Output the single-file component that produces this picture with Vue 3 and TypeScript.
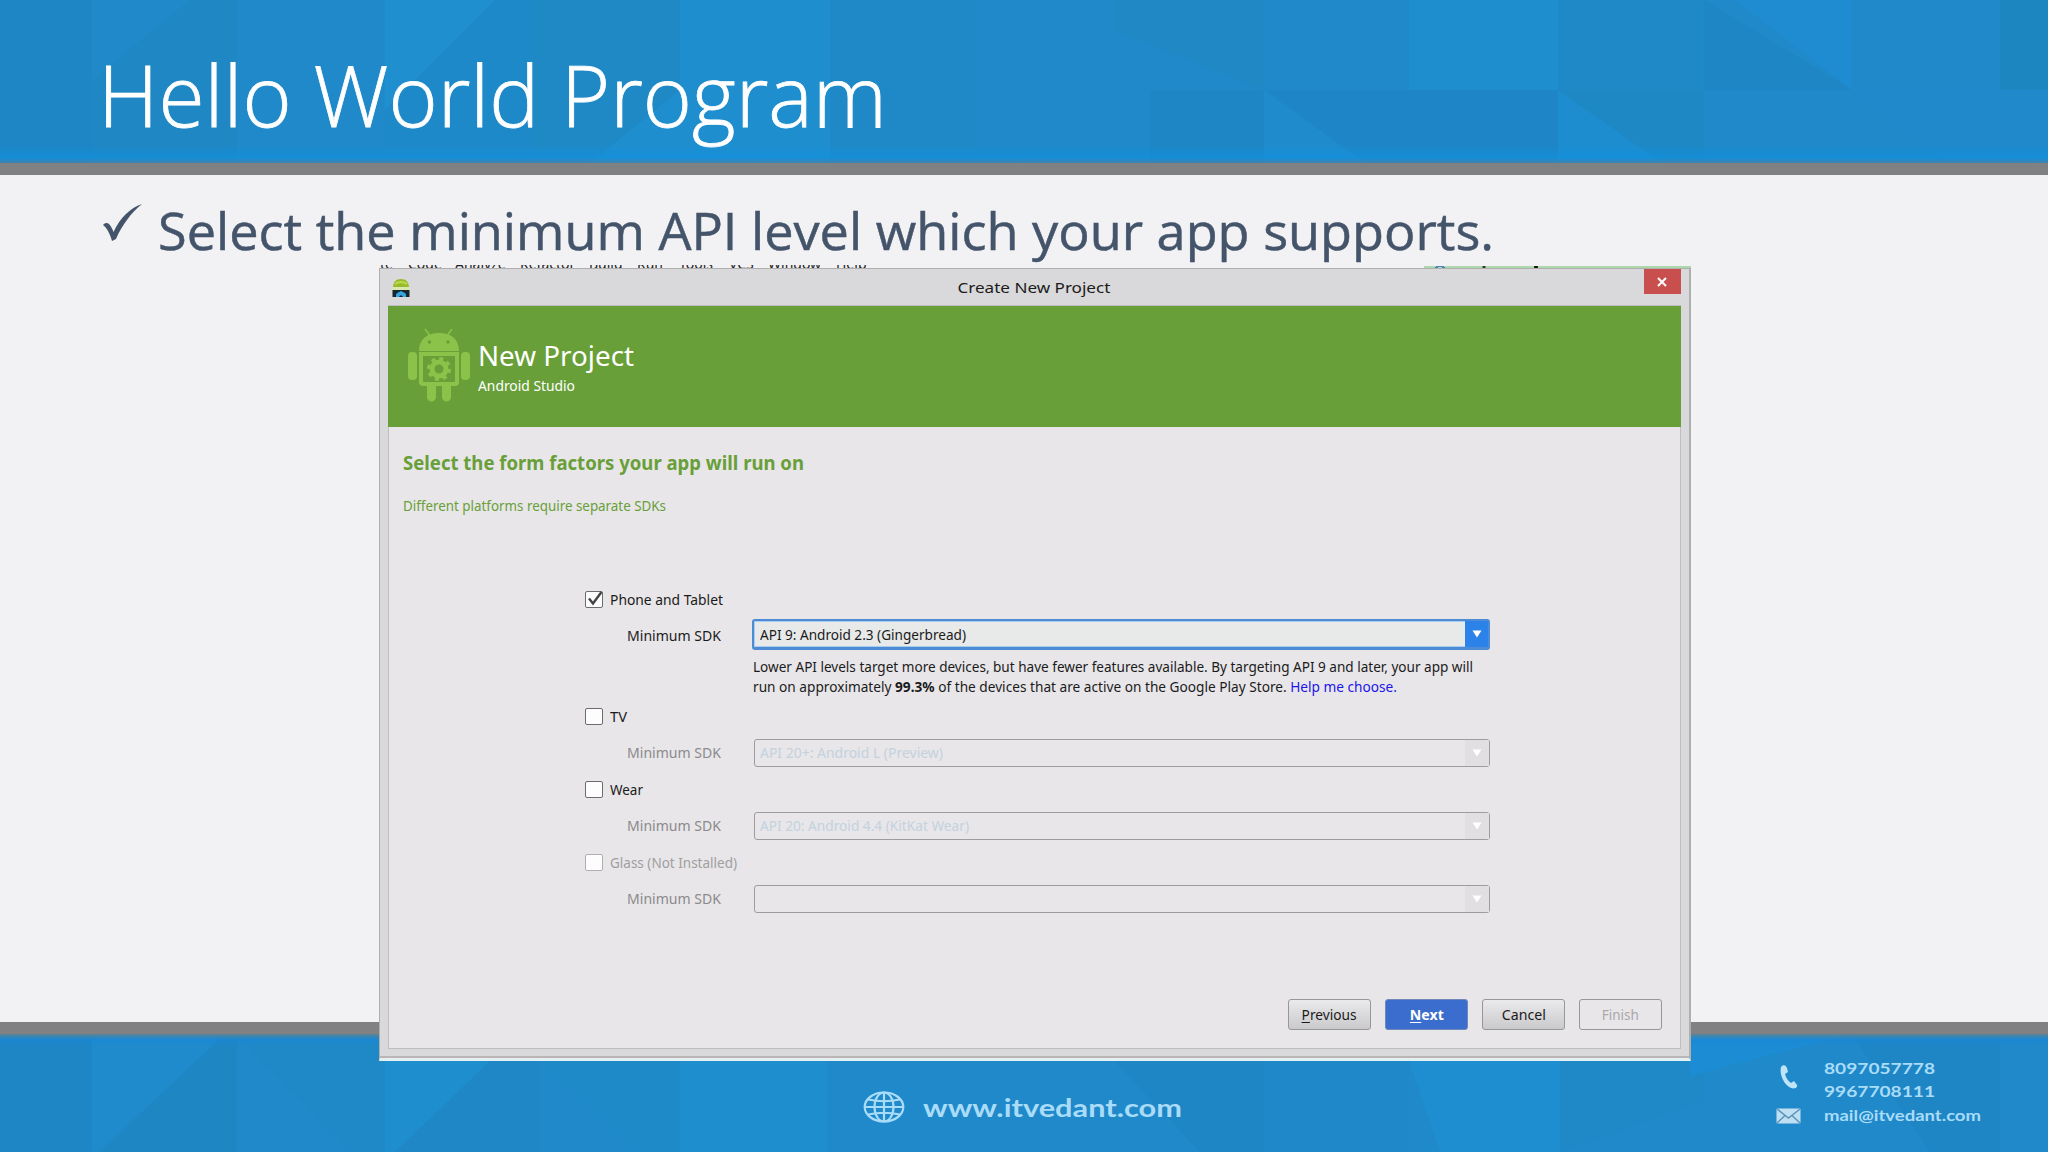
<script setup lang="ts">
interface Factor {
  name: string
  nameWidth: number
  api: string
  apiWidth: number
  checked: boolean
  installed: boolean
}

const factors: Factor[] = [
  { name: 'Phone and Tablet', nameWidth: 113, api: 'API 9: Android 2.3 (Gingerbread)', apiWidth: 206, checked: true, installed: true },
  { name: 'TV', nameWidth: 17, api: 'API 20+: Android L (Preview)', apiWidth: 183, checked: false, installed: true },
  { name: 'Wear', nameWidth: 33, api: 'API 20: Android 4.4 (KitKat Wear)', apiWidth: 209, checked: false, installed: true },
  { name: 'Glass (Not Installed)', nameWidth: 127, api: '', apiWidth: 0, checked: false, installed: false },
]

const menus = [
  { label: 'te', x: 1 }, { label: 'Code', x: 29 }, { label: 'Analyze', x: 76 },
  { label: 'Refactor', x: 141 }, { label: 'Build', x: 210 }, { label: 'Run', x: 258 },
  { label: 'Tools', x: 300 }, { label: 'VCS', x: 350 }, { label: 'Window', x: 389 },
  { label: 'Help', x: 457 },
]

// Scales a line of text horizontally to the given width.
const vFit = {
  mounted(el: HTMLElement, binding: { value: number }) {
    const natural = el.getBoundingClientRect().width
    if (natural > 0 && binding.value > 0) {
      el.style.transform = `scaleX(${binding.value / natural})`
    }
  },
}
</script>

<template>
  <div class="slide">
    <header class="banner">
      <svg class="mosaic" viewBox="0 0 2048 163" preserveAspectRatio="none">
        <rect width="2048" height="163" fill="#1f89c9" />
        <path d="M0 0H92V163H0Z" fill="#1e85c3" />
        <path d="M92 80L190 0H237V163H92Z" fill="#1f87c2" />
        <path d="M385 0H495L385 110Z" fill="#1f92d3" />
        <path d="M495 0H532V163H385V110Z" fill="#1e8ac9" />
        <path d="M532 0H680V90L590 163H532Z" fill="#1f8ac6" />
        <path d="M680 0H830V163H590L680 90Z" fill="#1f91d1" />
        <path d="M830 0H975V163H830Z" fill="#2089c7" />
        <path d="M1114 0H1264V90L1114 30Z" fill="#1f88c4" />
        <path d="M1150 90H1264V163H1150Z" fill="#1e86c4" />
        <path d="M1264 0H1409V90H1264Z" fill="#1f8aca" />
        <path d="M1264 90H1558V163H1365Z" fill="#1e86c6" />
        <path d="M1264 90L1365 163H1264Z" fill="#1f8ccf" />
        <path d="M1409 0H1558V90H1409Z" fill="#1f91d2" />
        <path d="M1558 0H1704V90H1558Z" fill="#1f8ac7" />
        <path d="M1558 90L1662 163H1558Z" fill="#1d90d2" />
        <path d="M1558 90L1704 90L1704 163H1662Z" fill="#1e88c4" />
        <path d="M1704 0L1852 90H1704Z" fill="#1e86c2" />
        <path d="M1734 0H1852V90Z" fill="#1f8dd4" />
        <path d="M1852 0H2000V90H1852Z" fill="#1f89c9" />
        <path d="M2000 0H2048V90H2000Z" fill="#1c86be" />
        <path d="M1852 90H2048V163H1945Z" fill="#1f8acd" />
      </svg>
      <h1 class="title"><span v-fit="789" class="fit">Hello World Program</span></h1>
    </header>

    <main class="content">
      <p class="bullet">
        <svg class="tick" width="42" height="40" viewBox="0 0 42 40">
          <path d="M1 22C5 18 8 20 11.500 29C18 15 28 5 40 1C29 10 20 22 14 36L10 38C8 31 5 25 1 22Z" fill="#44546a" />
        </svg>
        <span v-fit="1336" class="fit">Select the minimum API level which your app supports.</span>
      </p>
    </main>

    <footer class="footer">
      <svg class="mosaic" viewBox="0 1033 2048 119" preserveAspectRatio="none">
        <rect y="1033" width="2048" height="119" fill="#1f89ca" />
        <path d="M0 1033H92V1152H0Z" fill="#1e86c4" />
        <path d="M92 1033H225L110 1140L92 1152Z" fill="#1f8ccf" />
        <path d="M225 1033H237V1152H100Z" fill="#1e86c0" />
        <path d="M237 1033H385V1152H350Z" fill="#1f88c5" />
        <path d="M385 1033H490V1065L395 1152H385Z" fill="#1f91d1" />
        <path d="M490 1060H540V1152H395Z" fill="#1f87c4" />
        <path d="M540 1060H680V1152H640Z" fill="#1e8bc8" />
        <path d="M680 1060H827V1152H680Z" fill="#1f91d2" />
        <path d="M1114 1060H1264V1152H1200Z" fill="#1e86c4" />
        <path d="M1264 1060H1409V1152H1264Z" fill="#1f88c8" />
        <path d="M1409 1060H1560V1152H1440Z" fill="#1f91d3" />
        <path d="M1560 1060H1704V1100L1560 1152Z" fill="#1f8ac7" />
        <path d="M1690 1033H1852L1690 1075Z" fill="#1b90da" />
        <path d="M1852 1033H2000V1152H1930Z" fill="#1e86c4" />
      </svg>
      <div class="shade"></div>
      <div class="site">
        <svg width="42" height="32" viewBox="0 0 42 32" fill="none" stroke="#a9dcf8" stroke-width="2.200">
          <ellipse cx="21" cy="16" rx="19.3" ry="14.5" />
          <ellipse cx="21" cy="16" rx="9.5" ry="14.5" />
          <path d="M21 1.5V30.500M2 16H40M5 8.500Q21 12 37 8.500M5 23.500Q21 20 37 23.500" />
        </svg>
        <span v-fit="259" class="fit">www.itvedant.com</span>
      </div>
      <div class="contact">
        <div class="contact-icons">
          <svg width="20" height="26" viewBox="0 0 20 26">
            <path d="M2 3C4 0 7 1 8 4L9 8L6 10C7 14 9 17 12 19L15 17L18 21C19 24 15 25 12 24C5 21 0 10 2 3Z" fill="#bfe3f7" />
          </svg>
          <svg width="25" height="16" viewBox="0 0 25 16">
            <rect x=".5" y=".5" width="24" height="15" rx="1" fill="#bfe0f3" />
            <path d="M1 1L12.500 10L24 1M1 15L9 7.500M24 15L16 7.500" fill="none" stroke="#5f93b8" stroke-width="1.500" />
          </svg>
        </div>
        <div class="contact-lines">
          <span v-fit="111" class="fit">8097057778</span>
          <span v-fit="111" class="fit">9967708111</span>
          <span v-fit="157" class="fit">mail@itvedant.com</span>
        </div>
      </div>
    </footer>

    <div class="ide-menu">
      <span v-for="m in menus" :key="m.label" class="menu-word" :style="{ left: m.x + 'px' }">{{ m.label }}</span>
      <i class="ide-edge"></i>
    </div>

    <section class="dialog">
      <div class="titlebar">
        <svg class="app-icon" width="18" height="18" viewBox="0 0 18 18">
          <path d="M1 9C1 3 4 0 9 0S17 3 17 9Z" fill="#98bd2c" />
          <path d="M3 5Q9 1 15 5" fill="none" stroke="#bdd94f" stroke-width="2" />
          <rect y="8" width="18" height="3" fill="#dbe7ae" />
          <rect x=".5" y="11" width="17" height="7" fill="#16262f" />
          <path d="M4 18V15L6 13.500L9 12L12 13.500L14 15V18H11Q9 14.500 7 18Z" fill="#35a4df" />
        </svg>
        <span v-fit="153" class="fit mid caption">Create New Project</span>
        <span class="close">
          <svg width="10" height="10" viewBox="0 0 10 10"><path d="M1 1L9 9M9 1L1 9" stroke="#fff" stroke-width="2" /></svg>
        </span>
      </div>
      <div class="body">
        <div class="hero">
          <svg width="62" height="74" viewBox="0 0 62 74" fill="#8bc34a">
            <path d="M17 1L23 9M44 1L38 9" stroke="#8bc34a" stroke-width="1.600" />
            <path d="M11 23C11 11 19 5 31 5S51 11 51 23Z" />
            <circle cx="21.500" cy="14" r="1.700" fill="#689f38" />
            <circle cx="40" cy="14" r="1.700" fill="#689f38" />
            <rect x="0" y="24" width="9" height="28" rx="4" />
            <rect x="53" y="24" width="9" height="28" rx="4" />
            <path fill-rule="evenodd" d="M11 24H51V54Q51 58 47 58H43V69A4.500 4.500 0 0 1 34 69V58H28V69A4.500 4.500 0 0 1 19 69V58H15Q11 58 11 54ZM15 28V54H47V28Z" />
            <circle cx="31" cy="41" r="7" fill="none" stroke="#8bc34a" stroke-width="5" />
            <circle cx="31" cy="41" r="10.500" fill="none" stroke="#8bc34a" stroke-width="3" stroke-dasharray="4.120 4.120" />
          </svg>
          <div class="hero-text">
            <span v-fit="156" class="fit hero-title">New Project</span>
            <span v-fit="97" class="fit hero-sub">Android Studio</span>
          </div>
        </div>
        <div class="intro">
          <h2><span v-fit="401" class="fit">Select the form factors your app will run on</span></h2>
          <p><span v-fit="263" class="fit">Different platforms require separate SDKs</span></p>
        </div>
        <div class="form">
          <div v-for="f in factors" :key="f.name" class="factor" :class="{ on: f.checked }">
            <label class="check-row" :class="{ off: !f.installed }">
              <span class="box">
                <svg v-if="f.checked" width="18" height="18" viewBox="0 0 18 18"><path d="M4 7.500L8 12.500L16.500 1" fill="none" stroke="#444" stroke-width="2.400" /></svg>
              </span>
              <span v-fit="f.nameWidth" class="fit">{{ f.name }}</span>
            </label>
            <div class="sdk-row">
              <span class="sdk-label"><span v-fit="94" class="fit">Minimum SDK</span></span>
              <div class="combo">
                <span v-fit="f.apiWidth" class="fit value">{{ f.api }}</span>
                <span class="arrow"><svg width="10" height="8" viewBox="0 0 10 8"><path d="M0.500 0.500H9.500L5 7.500Z" fill="#fff" /></svg></span>
              </div>
            </div>
            <div v-if="f.checked" class="help">
              <div><span v-fit="720" class="fit">Lower API levels target more devices, but have fewer features available. By targeting API 9 and later, your app will</span></div>
              <div><span v-fit="644" class="fit">run on approximately <b>99.3%</b> of the devices that are active on the Google Play Store. <a>Help me choose.</a></span></div>
            </div>
          </div>
        </div>
        <div class="actions">
          <button><span v-fit="55" class="fit mid"><u>P</u>revious</span></button>
          <button class="primary"><span v-fit="34" class="fit mid"><u>N</u>ext</span></button>
          <button><span v-fit="44" class="fit mid">Cancel</span></button>
          <button class="disabled"><span v-fit="37" class="fit mid">Finish</span></button>
        </div>
      </div>
    </section>
  </div>
</template>

<style>
body {
  margin: 0;
  overflow: hidden;
}
</style>

<style scoped>
.slide {
  position: relative;
  display: flex;
  flex-direction: column;
  width: 2048px;
  height: 1152px;
  overflow: hidden;
  background: #f2f1f4;
  font-family: 'Noto Sans', 'Open Sans', sans-serif;
}
.fit {
  display: inline-block;
  white-space: nowrap;
  transform-origin: left center;
}
.mid {
  transform-origin: center;
}
.mosaic {
  position: absolute;
  inset: 0;
  width: 100%;
  height: 100%;
  opacity: 0.7;
}
.banner {
  position: relative;
  height: 163px;
  border-bottom: 12px solid #808182;
  background: linear-gradient(#1f89c9, #1f89c9) padding-box;
}
.banner::after {
  content: '';
  position: absolute;
  left: 0;
  right: 0;
  bottom: 0;
  height: 18px;
  background: linear-gradient(transparent, rgba(15, 145, 225, 0.6) 70%, rgba(70, 130, 170, 0.8));
}
.title {
  position: relative;
  margin: 0;
  padding: 35px 0 0 98px;
  font: 300 84px/120px 'Open Sans', sans-serif;
  color: #fff;
  -webkit-text-stroke: 0.8px #fff;
}
.content {
  flex: 1;
}
.bullet {
  display: flex;
  align-items: center;
  margin: 0;
  padding: 19px 0 0 102px;
  height: 72px;
  font: 400 52px/72px 'Open Sans', sans-serif;
  color: #44546a;
  -webkit-text-stroke: 0.5px #44546a;
}
.tick {
  margin: -14px 14px 0 0;
  flex: none;
}
.footer {
  position: relative;
  height: 118px;
  border-top: 12px solid #818082;
  background: linear-gradient(#1f89c9, #1f89c9) padding-box;
  font-family: Lato, sans-serif;
  color: #a9dcf8;
}
.shade {
  position: absolute;
  left: 0;
  right: 0;
  top: 0;
  height: 12px;
  background: linear-gradient(#5b8494, rgba(25, 135, 215, 0.7) 45%, transparent);
}
.site {
  position: absolute;
  left: 863px;
  top: 56px;
  display: flex;
  align-items: center;
  gap: 18px;
  height: 34px;
  font-size: 24px;
  font-weight: 700;
}
.contact {
  position: absolute;
  left: 1776px;
  top: 22px;
  display: flex;
}
.contact-icons {
  display: flex;
  flex-direction: column;
  gap: 18px;
  width: 48px;
  padding-top: 8px;
}
.contact-icons svg:first-child {
  margin-left: 3px;
}
.contact-lines {
  display: flex;
  flex-direction: column;
  align-items: flex-start;
  font-size: 16px;
  font-weight: 700;
  line-height: 23.4px;
}
.ide-menu {
  position: absolute;
  left: 379px;
  top: 265px;
  width: 1312px;
  height: 3px;
  overflow: hidden;
  color: #222;
}
.menu-word {
  position: absolute;
  bottom: -5px;
  font-size: 14px;
  line-height: 18px;
}
.ide-edge {
  position: absolute;
  left: 1045px;
  right: 0;
  top: 1px;
  height: 2px;
  background: radial-gradient(circle at 16px 5px, #acd8ab 4px, #4a84c4 4px 6px, transparent 6px), radial-gradient(circle at 60px 1px, #333 1px, transparent 2px), radial-gradient(circle at 112px 1px, #111 1.5px, transparent 2px), #acd8ab;
}
.dialog {
  position: absolute;
  left: 379px;
  top: 268px;
  width: 1312px;
  height: 793px;
  box-sizing: border-box;
  display: flex;
  flex-direction: column;
  padding: 0 8px 9px 8px;
  border: 1px solid #aeb0ae;
  border-right-width: 2px;
  border-bottom: 3px solid #e4f0f1;
  background: #d9d8da;
  box-shadow: inset 0 -2px #bcb5b5;
  font-size: 14px;
  color: #1b1b1b;
}
.titlebar {
  display: flex;
  align-items: flex-start;
  justify-content: space-between;
  height: 36px;
  flex: none;
}
.app-icon {
  margin: 10px 13px 0 4px;
}
.caption {
  line-height: 36px;
  font-size: 14.5px;
}
.close {
  display: flex;
  align-items: center;
  justify-content: center;
  width: 37px;
  height: 25px;
  background: #c94f4f;
}
.body {
  flex: 1;
  display: flex;
  flex-direction: column;
  border: 1px solid #bfbdbf;
  background: #e8e6e9;
}
.hero {
  display: flex;
  align-items: flex-start;
  height: 121px;
  margin: 0 -1px;
  padding-left: 20px;
  box-sizing: border-box;
  background: #689f38;
  color: #fff;
}
.hero svg {
  margin-top: 22px;
}
.hero-text {
  display: flex;
  flex-direction: column;
  align-items: flex-start;
  padding: 29px 0 0 8px;
}
.hero-title {
  font-size: 28px;
  line-height: 40px;
}
.hero-sub {
  margin-top: 1px;
  line-height: 20px;
}
.intro {
  height: 154px;
  padding-left: 14px;
  color: #689f38;
}
.intro h2 {
  margin: 0;
  padding-top: 20px;
  font-size: 19px;
  line-height: 32px;
}
.intro p {
  margin: 0;
  padding-top: 17px;
  line-height: 20px;
}
.form {
  width: 905px;
  margin-left: 196px;
  flex: 1;
}
.check-row {
  display: flex;
  align-items: center;
  height: 36px;
}
.check-row.off {
  color: #a09fa0;
}
.box {
  width: 18px;
  height: 17px;
  box-sizing: border-box;
  margin-right: 7px;
  border: 1px solid #6c6c6e;
  border-radius: 2px;
  background: #fdfdfe;
}
.off .box {
  border-color: #b0aeb0;
}
.box svg {
  display: block;
  margin-top: -1px;
  margin-left: -1px;
}
.sdk-row {
  display: flex;
  align-items: center;
  height: 37px;
  color: #8b8a8c;
}
.sdk-label {
  width: 127px;
  padding-left: 42px;
}
.combo {
  display: flex;
  justify-content: space-between;
  align-items: center;
  width: 736px;
  height: 28px;
  box-sizing: border-box;
  border: 1px solid #9d9c9f;
  border-radius: 3px;
  color: #c3d2de;
}
.value {
  margin-left: 5px;
}
.arrow {
  display: flex;
  align-items: center;
  justify-content: center;
  align-self: stretch;
  width: 24px;
  background: #e1dfe1;
}
.on .sdk-row {
  height: 35px;
  color: #1b1b1b;
}
.on .sdk-label {
  width: 125px;
  padding-top: 2px;
}
.on .combo {
  width: 738px;
  height: 31px;
  border: 2px solid #4d8bd4;
  border-bottom-width: 3px;
  box-shadow: inset 0 0 0 1px #a9cdf0;
  background: #e7eae9;
  color: #1b1b1b;
}
.on .value {
  margin-left: 6px;
}
.on .arrow {
  width: 23px;
  background: #2b83ea;
}
.help {
  height: 46px;
  box-sizing: border-box;
  margin-left: 168px;
  padding-top: 5px;
  line-height: 19.6px;
}
.help a {
  color: #2015e8;
}
.actions {
  display: flex;
  gap: 14px;
  justify-content: flex-end;
  padding: 0 18px 18px 0;
}
button {
  width: 83px;
  height: 31px;
  box-sizing: border-box;
  padding: 0;
  border: 1px solid #97969a;
  border-radius: 3px;
  background: linear-gradient(#eae9eb, #cac9cb);
  font: 14px 'Noto Sans', sans-serif;
  color: #1b1b1b;
}
button u {
  text-underline-offset: 2px;
}
button.primary {
  background: #3a6dcd;
  border-color: #7089b8;
  color: #fff;
  font-weight: 700;
}
button.disabled {
  background: #e8e6e9;
  color: #a9a8aa;
}
</style>
